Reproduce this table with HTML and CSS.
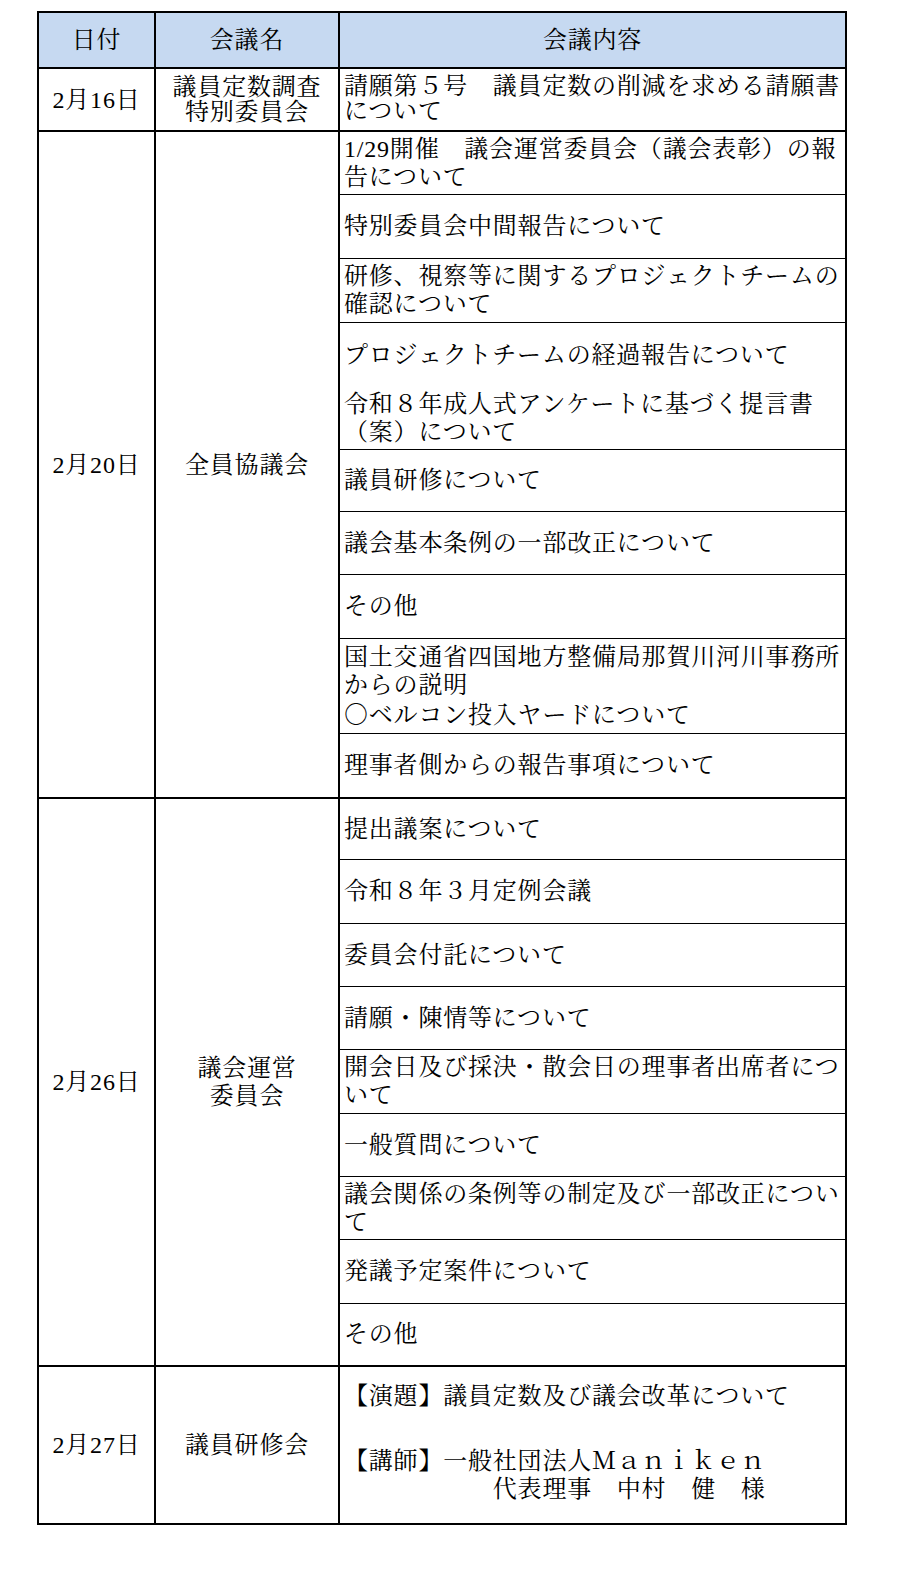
FILE: index.html
```html
<!DOCTYPE html>
<html lang="ja">
<head>
<meta charset="utf-8">
<title>会議日程</title>
<link rel="stylesheet" href="styles.css">
</head>
<body>
<div class="sheet">
  <div class="row head">
    <div class="cell c1">日付</div>
    <div class="cell c2">会議名</div>
    <div class="cell c3h">会議内容</div>
  </div>

  <div class="row r1">
    <div class="cell c1">2月16日</div>
    <div class="cell c2">議員定数調査<br>特別委員会</div>
    <div class="list">
      <div class="item h61 tight">請願第５号　議員定数の削減を求める請願書について</div>
    </div>
  </div>

  <div class="row">
    <div class="cell c1">2月20日</div>
    <div class="cell c2">全員協議会</div>
    <div class="list">
      <div class="item">1/29開催　議会運営委員会（議会表彰）の報告について</div>
      <div class="item h64">特別委員会中間報告について</div>
      <div class="item h64">研修、視察等に関するプロジェクトチームの確認について</div>
      <div class="item h64 noline">プロジェクトチームの経過報告について</div>
      <div class="item">令和８年成人式アンケートに基づく提言書（案）について</div>
      <div class="item h62">議員研修について</div>
      <div class="item">議会基本条例の一部改正について</div>
      <div class="item h64">その他</div>
      <div class="item h95"><div class="text">国土交通省四国地方整備局那賀川河川事務所<br>からの説明<br><span class="cjk">○</span>ベルコン投入ヤードについて</div></div>
      <div class="item">理事者側からの報告事項について</div>
    </div>
  </div>

  <div class="row">
    <div class="cell c1">2月26日</div>
    <div class="cell c2">議会運営<br>委員会</div>
    <div class="list">
      <div class="item h61">提出議案について</div>
      <div class="item h64">令和８年３月定例会議</div>
      <div class="item">委員会付託について</div>
      <div class="item">請願・陳情等について</div>
      <div class="item h64">開会日及び採決・散会日の理事者出席者について</div>
      <div class="item">一般質問について</div>
      <div class="item">議会関係の条例等の制定及び一部改正について</div>
      <div class="item h64">発議予定案件について</div>
      <div class="item h61">その他</div>
    </div>
  </div>

  <div class="row r4">
    <div class="cell c1">2月27日</div>
    <div class="cell c2">議員研修会</div>
    <div class="list">
      <div class="lecture">
        <p class="topic">【演題】議員定数及び議会改革について</p>
        <p class="speaker">【講師】一般社団法人Ｍａｎｉｋｅｎ<br>　　　　　　代表理事　中村　健　様</p>
      </div>
    </div>
  </div>
</div>
</body>
</html>
```

FILE: styles.css
```css
html, body {
  margin: 0;
  padding: 0;
  background: #ffffff;
}

body {
  font-family: "Liberation Serif", "Noto Serif CJK JP", "Noto Sans CJK JP", serif;
  font-size: 24px;
  letter-spacing: 0.8px;
  color: #000000;
}

.cjk {
  font-family: "Noto Serif CJK JP", "Noto Sans CJK JP", serif;
}

.sheet {
  margin: 11px 0 0 37px;
  width: 806px;
  border: 2px solid #000000;
  border-bottom: none;
}

.row {
  display: grid;
  grid-template-columns: 117px 184px 505px;
  border-bottom: 2px solid #000000;
}

.head {
  height: 54px;
  background: #c6d9f1;
}

.cell {
  display: flex;
  align-items: center;
  justify-content: center;
  text-align: center;
  line-height: 28px;
}

.c1,
.c2 {
  border-right: 2px solid #000000;
  box-sizing: border-box;
}

.c3h {
  display: flex;
  align-items: center;
  justify-content: center;
}

.r1 .c2 {
  line-height: 25px;
}

.list {
  display: flex;
  flex-direction: column;
}

.item {
  box-sizing: border-box;
  height: 63px;
  padding: 0 2px 1px 4px;
  display: flex;
  align-items: center;
  line-height: 28px;
  border-bottom: 1px solid #000000;
}

.item:last-child,
.item.noline {
  border-bottom: none;
}

.item.h61 { height: 61px; }
.item.h62 { height: 62px; }
.item.h64 { height: 64px; }
.item.h95 { height: 95px; }

.item.tight {
  line-height: 25px;
}

.r4 {
  height: 156px;
}

.lecture {
  padding: 15px 2px 0 4px;
  line-height: 28px;
}

.lecture p {
  margin: 0;
}

.topic {
  margin-bottom: 37px !important;
}
```
